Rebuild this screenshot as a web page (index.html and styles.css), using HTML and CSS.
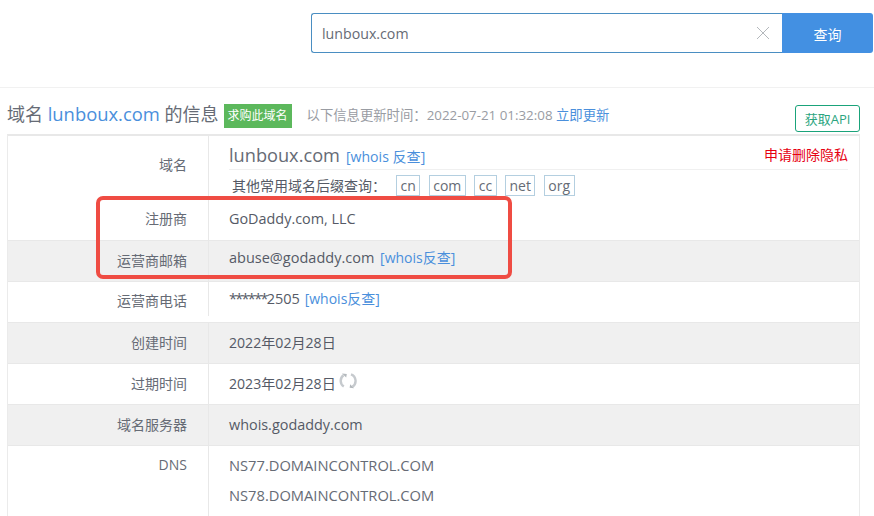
FILE: index.html
```html
<!DOCTYPE html>
<html lang="zh">
<head>
<meta charset="utf-8">
<title>lunboux.com</title>
<link rel="stylesheet" href="styles.css">
</head>
<body>
<header class="search-area">
  <div class="search">
    <div class="search-input">
      <span class="search-text">lunboux.com</span>
      <svg class="clear" width="14" height="14" viewBox="0 0 14 14"><path d="M1 1l12 12M13 1L1 13" stroke="#b4b8bc" stroke-width="1" fill="none"/></svg>
    </div>
    <div class="search-btn">查询</div>
  </div>
</header>
<main class="content">
  <div class="title-row">
    <h1 class="title">域名 <a class="blue title-link">lunboux.com</a> 的信息</h1>
    <span class="buy">求购此域名</span>
    <span class="updated">以下信息更新时间：2022-07-21 01:32:08 <a class="blue">立即更新</a></span>
    <span class="api">获取API</span>
  </div>
  <div class="table">
    <div class="row row-domain">
      <div class="label label-domain">域名</div>
      <div class="value value-domain">
        <div class="domain-head">
          <span class="domain-name">lunboux.com</span>
          <a class="blue link-first">[whois 反查]</a>
          <a class="remove">申请删除隐私</a>
        </div>
        <div class="suffixes">
          <span class="suffix-label">其他常用域名后缀查询：</span>
          <span class="tag">cn</span><span class="tag">com</span><span class="tag">cc</span><span class="tag">net</span><span class="tag">org</span>
        </div>
      </div>
    </div>
    <div class="row row-short"><div class="label label-reg">注册商</div><div class="value value-reg">GoDaddy.com, LLC</div></div>
    <div class="row alt"><div class="label low">运营商邮箱</div><div class="value up">abuse@godaddy.com <a class="blue link">[whois反查]</a></div></div>
    <div class="row"><div class="label low label-phone">运营商电话</div><div class="value up"><span class="stars">******</span>2505 <a class="blue link link-phone">[whois反查]</a></div></div>
    <div class="row alt"><div class="label">创建时间</div><div class="value date">2022年02月28日</div></div>
    <div class="row"><div class="label">过期时间</div><div class="value date">2023年02月28日
      <svg class="refresh" width="18" height="18" viewBox="0 0 18 18" fill="none"><path d="M4.5 3.2A7 7 0 0 0 4.8 14.6M12 2.4A7 7 0 0 1 13.4 14.8" stroke="#c6cace" stroke-width="2.4"/><path d="M3 1.6l4.8.4-.6 3.6zM15 16.2l-4.4-.4.6-3.6z" fill="#b4b9bd"/></svg></div></div>
    <div class="row alt"><div class="label">域名服务器</div><div class="value">whois.godaddy.com</div></div>
    <div class="row row-dns">
      <div class="label label-dns">DNS</div>
      <div class="value value-dns">
        <div>NS77.DOMAINCONTROL.COM</div>
        <div>NS78.DOMAINCONTROL.COM</div>
      </div>
    </div>
  </div>
  <div class="highlight"></div>
</main>
</body>
</html>
```

FILE: styles.css
```css
* { box-sizing: border-box; }
html, body { margin: 0; padding: 0; height: 516px; overflow: hidden; background: #fff; }
body { font-family: "Open Sans", "Noto Sans CJK SC", sans-serif; font-size: 14px; color: #555a66; position: relative; }
.blue { color: #4a8fdc; }
.search-area { height: 88px; padding: 13px 1px 0 311px; border-bottom: 1px solid #f1f1f1; }
.search { display: flex; height: 40px; }
.search-input { flex: 1; display: flex; align-items: center; justify-content: space-between; padding: 0 12px 0 10px; border: 1px solid #4a8ec2; border-right: 0; border-radius: 3px 0 0 3px; }
.search-text { font-size: 14.2px; color: #666b75; }
.search-btn { width: 91px; background: #4390e2; color: #fff; font-size: 14px; display: flex; align-items: center; justify-content: center; padding-top: 2px; border-radius: 0 3px 3px 0; }
.content { position: relative; padding: 0 14px 0 7px; }
.title-row { height: 46px; display: flex; align-items: flex-start; position: relative; }
.title { margin: 14px 0 0; font-size: 18px; font-weight: 400; line-height: 24px; color: #666b75; white-space: nowrap; }
.title-link { font-size: 18.4px; }
.buy { margin: 16px 0 0 5px; width: 68px; height: 24px; background: #5cb85c; color: #fff; font-size: 12px; line-height: 24px; text-align: center; }
.updated { margin: 17px 0 0 15px; font-size: 13.35px; line-height: 20px; color: #999ca3; white-space: nowrap; }
.api { position: absolute; left: 788px; top: 17px; width: 65px; height: 27px; border: 1px solid #1aa37a; border-radius: 3px; background: #fff; color: #2ba57f; font-size: 13px; line-height: 26px; text-align: center; z-index: 1; }
.table { height: 382px; border: 1px solid #ebebeb; border-top: 2px solid #e8e8e8; border-bottom: 0; }
.row { display: flex; height: 41px; border-bottom: 1px solid #e8e8e8; }
.alt { background: #f0f0f0; }
.label { width: 201px; flex: none; text-align: right; padding: 10px 21px 0 0; line-height: 20px; font-size: 14px; color: #666b75; border-right: 1px solid #e8e8e8; }
.low { padding-top: 10px; }
.label-phone { padding-top: 9px; height: 34px; }
.label-reg { padding-top: 11px; }
.value { flex: 1; padding: 10px 0 0 20px; line-height: 20px; font-size: 14.4px; color: #555a66; }
.value-reg { padding-top: 11px; }
.date { font-size: 14.1px; }
.up { padding-top: 7px; font-size: 14.5px; }
.link { font-size: 14px; margin-left: 2px; }
.link-phone { margin-left: 1px; }
.stars { letter-spacing: -1.7px; }
.row-domain { height: 62px; border-bottom: 0; }
.row-short { height: 43px; }
.label-domain { padding-top: 19px; }
.value-domain { padding: 7px 11px 0 20px; font-size: 14px; }
.domain-head { height: 27px; display: flex; align-items: center; border-bottom: 1px solid #f0f0f0; position: relative; }
.domain-name { font-size: 18.2px; color: #666b75; line-height: 20px; padding-bottom: 2px; }
.link-first { margin-left: 6px; font-size: 14.1px; padding-top: 2px; }
.remove { position: absolute; right: 0; top: 2px; color: #e60012; font-size: 14px; }
.suffixes { display: flex; align-items: center; padding: 5px 0 0 3px; }
.suffix-label { font-size: 14px; width: 164px; flex: none; white-space: nowrap; color: #555a66; }
.tag { height: 21px; line-height: 19px; padding: 0 3.5px; margin-right: 8.4px; border: 1px solid #b4cfe0; color: #666b75; font-size: 14px; }
.refresh { vertical-align: top; margin-top: -2px; }
.row-dns { height: 80px; border-bottom: 0; }
.label-dns { padding-top: 9px; }
.value-dns { padding-top: 9px; color: #666b75; font-size: 14.7px; }
.value-dns div { height: 30px; }
.highlight { position: absolute; left: 96px; top: 108px; width: 416px; height: 83px; border: 4px solid #ef4c43; border-radius: 7px; pointer-events: none; }
```
